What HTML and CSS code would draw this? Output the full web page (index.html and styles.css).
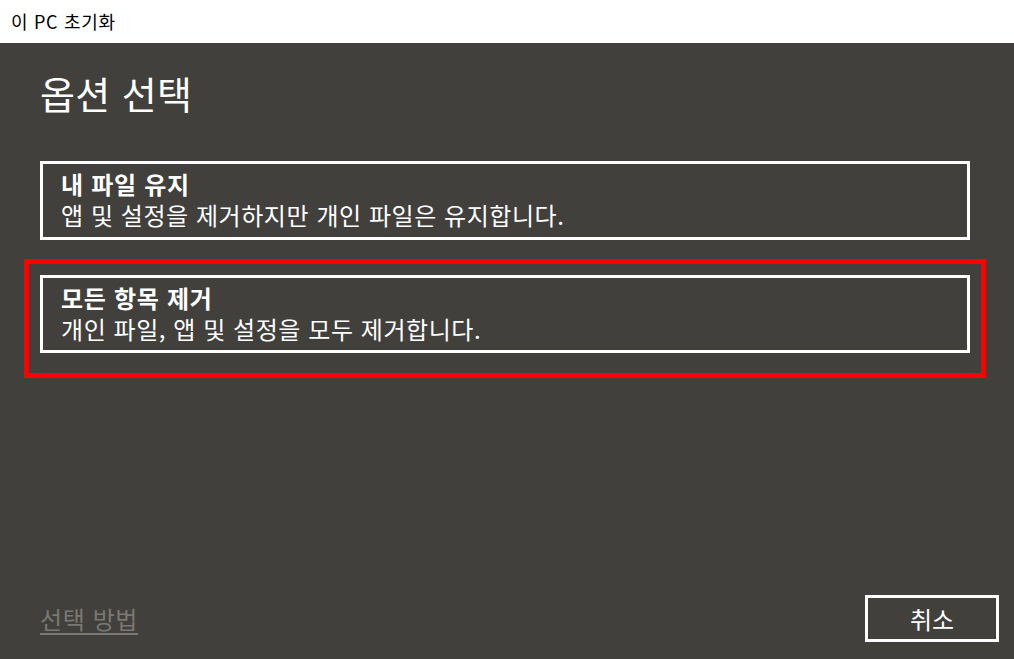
FILE: index.html
```html
<!DOCTYPE html>
<html lang="ko">
<head>
<meta charset="utf-8">
<title>이 PC 초기화</title>
<link rel="stylesheet" href="styles.css">
</head>
<body>
<div class="titlebar">이 PC 초기화</div>
<div class="main">
  <h1 class="heading">옵션 선택</h1>
  <div class="card first">
    <div class="card-title">내 파일 유지</div>
    <div class="card-desc">앱 및 설정을 제거하지만 개인 파일은 유지합니다.</div>
  </div>
  <div class="highlight">
    <div class="card">
      <div class="card-title">모든 항목 제거</div>
      <div class="card-desc">개인 파일, 앱 및 설정을 모두 제거합니다.</div>
    </div>
  </div>
  <div class="footer">
    <a class="help-link" href="#">선택 방법</a>
    <button class="cancel">취소</button>
  </div>
</div>
</body>
</html>
```
FILE: styles.css
```css
html, body {
  margin: 0;
  padding: 0;
  height: 100%;
}
body {
  font-family: "Noto Sans CJK KR", "Malgun Gothic", sans-serif;
  background: #42403c;
  color: #ffffff;
  display: flex;
  flex-direction: column;
  overflow: hidden;
}
.titlebar {
  height: 43px;
  line-height: 43px;
  background: #ffffff;
  color: #000000;
  font-size: 18px;
  letter-spacing: 0.7px;
  padding-left: 11px;
  flex: none;
}
.main {
  flex: 1;
  display: flex;
  flex-direction: column;
  padding-top: 26px;
}
.heading {
  margin: 0 0 0 40px;
  font-size: 38px;
  font-weight: 400;
  line-height: 48px;
  letter-spacing: 0.4px;
  color: #ffffff;
}
.card {
  box-sizing: border-box;
  width: 930px;
  height: 79px;
  border: 3px solid #ffffff;
  padding: 4px 18px 0;
}
.card.first {
  margin: 44px 0 0 40px;
}
.card-title {
  font-size: 24px;
  font-weight: 700;
  line-height: 31px;
  letter-spacing: 0.7px;
}
.card-desc {
  font-size: 24px;
  font-weight: 400;
  line-height: 31px;
  letter-spacing: 0.55px;
}
.highlight {
  box-sizing: border-box;
  width: 962px;
  height: 119px;
  margin: 19px 0 0 24px;
  border: 5px solid #ff0000;
  padding: 11px 11px 0;
}
.highlight .card {
  height: 78px;
}
.footer {
  margin-top: auto;
  display: flex;
  justify-content: space-between;
  align-items: center;
  padding: 0 15px 17px 40px;
}
.help-link {
  color: #7a7874;
  font-size: 24px;
  line-height: 31px;
  letter-spacing: 0.6px;
  text-decoration: underline;
  text-underline-offset: 4px;
}
.cancel {
  box-sizing: border-box;
  width: 134px;
  height: 47px;
  border: 3px solid #ffffff;
  background: transparent;
  color: #ffffff;
  font-family: "Noto Sans CJK KR", "Malgun Gothic", sans-serif;
  font-size: 24px;
  line-height: 1;
  padding: 0;
}
```
